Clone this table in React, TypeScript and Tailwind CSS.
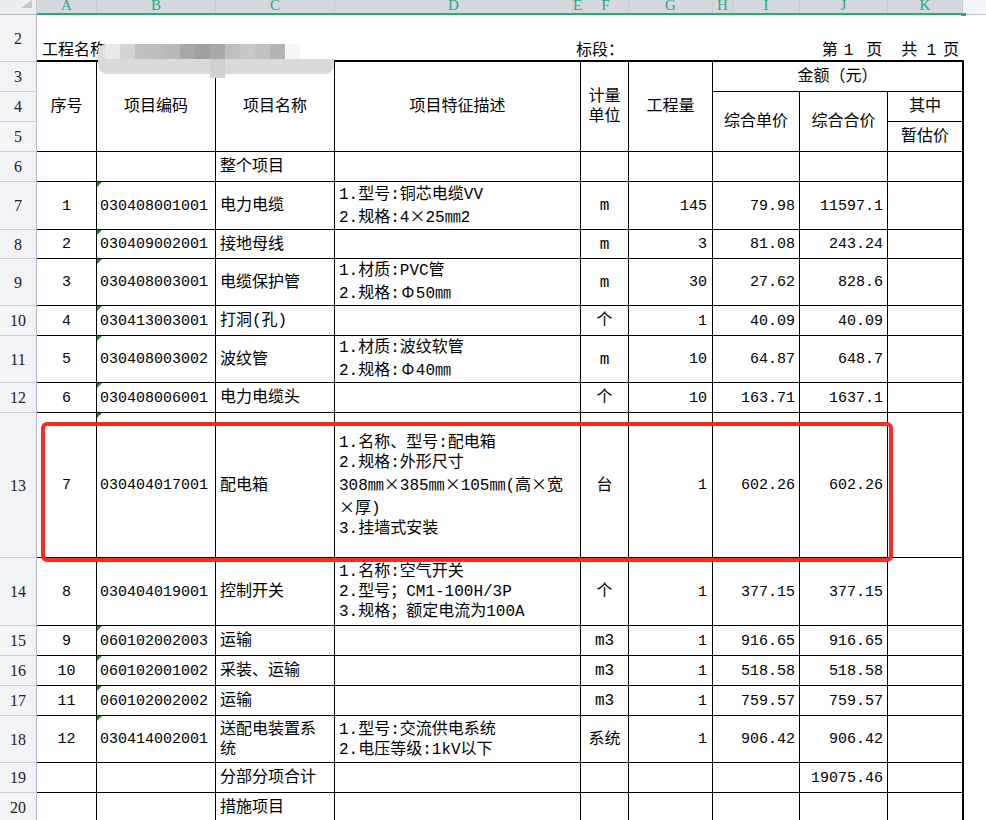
import type { ReactNode } from "react"

const cell = "flex items-center border-b border-r border-black"
const lastCell = "flex items-center border-b border-r-2 border-black"
const num = "[font-family:'Liberation_Mono',monospace] text-[15px]"

function W({ children }: { children: ReactNode }) {
  return (
    <span className="inline-block w-[16px] text-center [font-family:'Noto_Sans_CJK_SC',sans-serif]">{children}</span>
  )
}

function RowNo({ n }: { n: number }) {
  return (
    <div className="flex items-center justify-center border-b border-r border-b-[#c9ced6] border-r-[#b4bbc6] bg-[#f2f3f6] pt-[1px] text-[16px] text-[#222] [font-family:'Liberation_Serif',serif]">
      {n}
    </div>
  )
}

type Item = {
  r: number
  no: string
  code: string
  name: ReactNode
  desc?: ReactNode[]
  unit: string
  qty: string
  price: string
  total: string
}

const items: Item[] = [
  { r: 7, no: "1", code: "030408001001", name: "电力电缆", desc: ["1.型号:铜芯电缆VV", <>2.规格:4<W>×</W>25㎜2</>], unit: "m", qty: "145", price: "79.98", total: "11597.1" },
  { r: 8, no: "2", code: "030409002001", name: "接地母线", unit: "m", qty: "3", price: "81.08", total: "243.24" },
  { r: 9, no: "3", code: "030408003001", name: "电缆保护管", desc: ["1.材质:PVC管", <>2.规格:<W>Φ</W>50㎜</>], unit: "m", qty: "30", price: "27.62", total: "828.6" },
  { r: 10, no: "4", code: "030413003001", name: "打洞(孔)", unit: "个", qty: "1", price: "40.09", total: "40.09" },
  { r: 11, no: "5", code: "030408003002", name: "波纹管", desc: ["1.材质:波纹软管", <>2.规格:<W>Φ</W>40㎜</>], unit: "m", qty: "10", price: "64.87", total: "648.7" },
  { r: 12, no: "6", code: "030408006001", name: "电力电缆头", unit: "个", qty: "10", price: "163.71", total: "1637.1" },
  {
    r: 13,
    no: "7",
    code: "030404017001",
    name: "配电箱",
    desc: [
      "1.名称、型号:配电箱",
      "2.规格:外形尺寸",
      <>308㎜<W>×</W>385㎜<W>×</W>105㎜(高<W>×</W>宽</>,
      <><W>×</W>厚)</>,
      "3.挂墙式安装",
    ],
    unit: "台",
    qty: "1",
    price: "602.26",
    total: "602.26",
  },
  { r: 14, no: "8", code: "030404019001", name: "控制开关", desc: ["1.名称:空气开关", "2.型号；CM1-100H/3P", "3.规格；额定电流为100A"], unit: "个", qty: "1", price: "377.15", total: "377.15" },
  { r: 15, no: "9", code: "060102002003", name: "运输", unit: "m3", qty: "1", price: "916.65", total: "916.65" },
  { r: 16, no: "10", code: "060102001002", name: "采装、运输", unit: "m3", qty: "1", price: "518.58", total: "518.58" },
  { r: 17, no: "11", code: "060102002002", name: "运输", unit: "m3", qty: "1", price: "759.57", total: "759.57" },
  { r: 18, no: "12", code: "030414002001", name: <>送配电装置系<br />统</>, desc: ["1.型号:交流供电系统", "2.电压等级:1kV以下"], unit: "系统", qty: "1", price: "906.42", total: "906.42" },
]

const letters = [
  { l: "A", w: "w-[60px]" },
  { l: "B", w: "w-[119px]" },
  { l: "C", w: "w-[119px]" },
  { l: "D", w: "w-[238px]" },
  { l: "E", w: "w-[10px]" },
  { l: "F", w: "w-[46px]" },
  { l: "G", w: "w-[84px]" },
  { l: "H", w: "w-[20px]" },
  { l: "I", w: "w-[67px]" },
  { l: "J", w: "w-[88px]" },
  { l: "K", w: "w-[75px]" },
]

const mosaic = [
  "bg-[#e9e9e9]",
  "bg-[#d4d4d4]",
  "bg-[#bfbfbf]",
  "bg-[#bdbdbd]",
  "bg-[#b9b9b9]",
  "bg-[#a8a8a8]",
  "bg-[#9f9f9f]",
  "bg-[#a9a9a9]",
  "bg-[#bfbfbf]",
  "bg-[#c7c7c7]",
  "bg-[#c1c1c1]",
  "bg-[#b3b3b3]",
  "bg-[#f6f6f6]",
]

export default function App() {
  return (
    <div className="relative h-[820px] w-[986px] overflow-hidden bg-white text-[16px] leading-[20px] text-black [font-family:'Liberation_Mono','Noto_Sans_CJK_SC',monospace]">
      {/* column letters */}
      <div className="flex h-[15px]">
        <div className="relative w-[37px] border-b border-r border-b-[#b3bac5] border-r-[#c2c7cf] bg-[#eceef1]">
          <svg className="absolute left-[21px] top-0" width="11" height="8" viewBox="0 0 11 8">
            <polygon points="11,0 11,8 0,8" fill="#c4c6ca" />
          </svg>
        </div>
        <div className="flex border-b-2 border-[#1fb074] bg-[#d5d8de]">
          {letters.map((c) => (
            <div
              key={c.l}
              className={`${c.w} flex h-[13px] justify-center overflow-hidden border-r border-[#c6cad1] text-[15px] leading-[11px] text-[#27a985] [font-family:'Liberation_Serif',serif]`}
            >
              {c.l}
            </div>
          ))}
        </div>
        <div className="relative flex-1 border-b border-[#c3c7ce] bg-[#f3f4f6]">
          <div className="absolute -left-[2px] top-[13px] h-[3px] w-[5px] bg-[#1fb074]" />
        </div>
      </div>

      <div className="grid w-[964px] grid-cols-[37px_60px_119px_119px_246px_48px_84px_87px_88px_76px] grid-rows-[47px_30px_30px_30px_30px_48px_29px_47px_30px_47px_30px_145px_68px_30px_30px_30px_47px_30px_30px]">
        {/* row 2: title line */}
        <RowNo n={2} />
        <div className="col-span-9 flex items-end border-b-2 border-black pb-[1px] leading-[16px]">
          <div className="w-[539px] pl-[5px]">工程名称：</div>
          <div>标段：</div>
          <div className="ml-auto flex pr-[5px]">
            <span>第</span>
            <span className="ml-[6px]">1</span>
            <span className="ml-[13px]">页</span>
            <span className="ml-[19px]">共</span>
            <span className="ml-[9px]">1</span>
            <span className="ml-[7px]">页</span>
          </div>
        </div>

        {/* rows 3-5: headings */}
        <RowNo n={3} />
        <div className={`${cell} row-span-3 justify-center`}>序号</div>
        <div className={`${cell} row-span-3 justify-center`}>项目编码</div>
        <div className={`${cell} row-span-3 justify-center`}>项目名称</div>
        <div className={`${cell} row-span-3 justify-center`}>项目特征描述</div>
        <div className={`${cell} row-span-3 justify-center text-center`}>
          计量
          <br />
          单位
        </div>
        <div className={`${cell} row-span-3 justify-center`}>工程量</div>
        <div className={`${lastCell} col-span-3 justify-center`}>金额（元）</div>

        <RowNo n={4} />
        <div className={`${cell} row-span-2 justify-center`}>综合单价</div>
        <div className={`${cell} row-span-2 justify-center`}>综合合价</div>
        <div className={`${lastCell} justify-center`}>其中</div>

        <RowNo n={5} />
        <div className={`${lastCell} justify-center`}>暂估价</div>

        {/* row 6 */}
        <RowNo n={6} />
        <div className={cell} />
        <div className={cell} />
        <div className={`${cell} pl-[4px]`}>整个项目</div>
        <div className={cell} />
        <div className={cell} />
        <div className={cell} />
        <div className={cell} />
        <div className={cell} />
        <div className={lastCell} />

        {items.map((it) => (
          <div key={it.r} className="contents">
            <RowNo n={it.r} />
            <div className={`${cell} ${num} justify-center pt-[2px]`}>{it.no}</div>
            <div className={`${cell} ${num} relative pl-[3px] pt-[2px]`}>
              <span className="absolute left-0 top-0 h-0 w-0 border-r-[5px] border-t-[5px] border-r-transparent border-t-[#1e8a2a]" />
              {it.code}
            </div>
            <div className={`${cell} pl-[4px] pt-[1px]`}>{it.name}</div>
            <div className={`${cell} whitespace-nowrap pl-[4px] pt-[1px]`}>
              {it.desc && (
                <div>
                  {it.desc.map((d, i) => (
                    <div key={i}>{d}</div>
                  ))}
                </div>
              )}
            </div>
            <div className={`${cell} justify-center pt-[1px]`}>{it.unit}</div>
            <div className={`${cell} ${num} justify-end pr-[5px] pt-[2px]`}>{it.qty}</div>
            <div className={`${cell} ${num} justify-end pr-[4px] pt-[2px]`}>{it.price}</div>
            <div className={`${cell} ${num} justify-end pr-[4px] pt-[2px]`}>{it.total}</div>
            <div className={lastCell} />
          </div>
        ))}

        {/* row 19 */}
        <RowNo n={19} />
        <div className={cell} />
        <div className={cell} />
        <div className={`${cell} pl-[4px] pt-[1px]`}>分部分项合计</div>
        <div className={cell} />
        <div className={cell} />
        <div className={cell} />
        <div className={cell} />
        <div className={`${cell} ${num} justify-end pr-[4px] pt-[2px]`}>19075.46</div>
        <div className={lastCell} />

        {/* row 20 */}
        <RowNo n={20} />
        <div className={cell} />
        <div className={cell} />
        <div className={`${cell} pl-[4px] pt-[1px]`}>措施项目</div>
        <div className={cell} />
        <div className={cell} />
        <div className={cell} />
        <div className={cell} />
        <div className={cell} />
        <div className={lastCell} />
      </div>

      {/* mosaic over the project name */}
      <div className="absolute left-[98px] top-[44px] w-[236px]">
        <div className="flex h-[15px] overflow-hidden rounded-tl-[8px]">
          <div className="w-[7px] bg-[#dcdcdc]" />
          {mosaic.map((c, i) => (
            <div key={i} className={`w-[15px] ${c}`} />
          ))}
        </div>
        <div className="flex h-[15px] rounded-b-[9px] rounded-tl-[2px] bg-[#dadada]">
          <div className="ml-[112px] w-[15px] bg-[#d0d0d0]" />
        </div>
        <div className="ml-[112px] h-[4px] w-[15px] bg-[#d3d3d3]" />
      </div>

      {/* red highlight */}
      <div className="absolute left-[41px] top-[422px] h-[140px] w-[852px] rounded-[6px] border-4 border-[#ff2b22]" />
    </div>
  )
}
